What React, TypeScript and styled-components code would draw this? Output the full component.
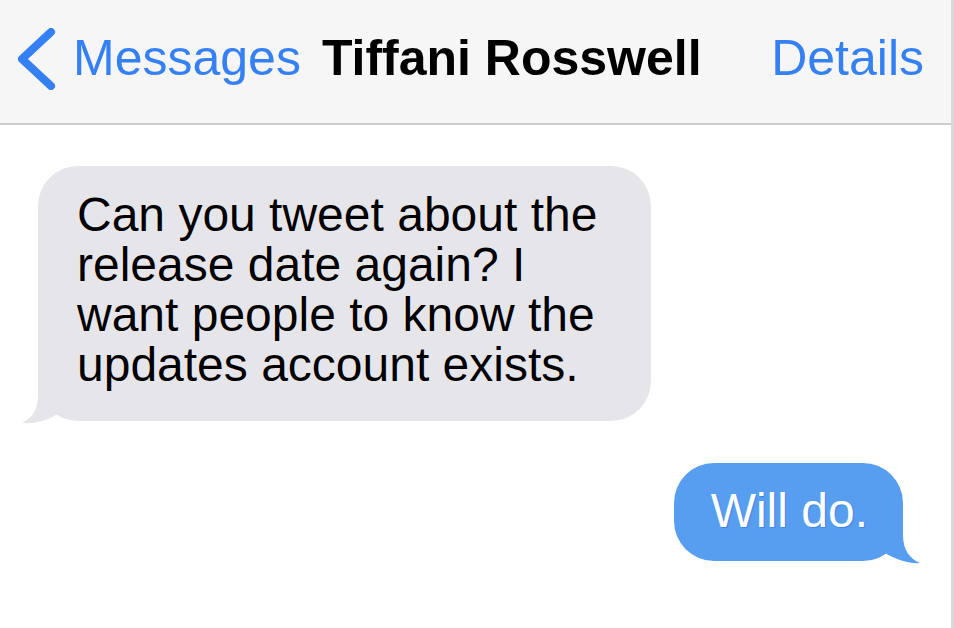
import React from "react";
import styled, { createGlobalStyle } from "styled-components";

const Global = createGlobalStyle`
  html, body { margin: 0; padding: 0; background: #ffffff; }
  body { font-family: "Liberation Sans", Arial, Helvetica, sans-serif; }
`;

const Page = styled.div`
  width: 951px;
  height: 628px;
  border-right: 3px solid #d9d9d9;
  background: #ffffff;
  display: flex;
  flex-direction: column;
  overflow: hidden;
`;

const NavBar = styled.header`
  height: 125px;
  box-sizing: border-box;
  padding: 0 27px 8px 16px;
  background: #f6f6f6;
  border-bottom: 2px solid #cecece;
  display: flex;
  align-items: center;
  flex-shrink: 0;
`;

const BackButton = styled.div`
  display: flex;
  align-items: center;
  gap: 17px;
  color: #3480f4;
`;

const Chevron = styled.svg`
  width: 40px;
  height: 62px;
  margin-top: 2px;
  display: block;
`;

const NavText = styled.span<{ $bold?: boolean; $blue?: boolean }>`
  font-size: 50px;
  line-height: 50px;
  font-weight: ${(p) => (p.$bold ? 700 : 400)};
  color: ${(p) => (p.$blue ? "#3480f4" : "#000000")};
  white-space: nowrap;
`;

const Title = styled(NavText)`
  margin-left: 21px;
`;

const DetailsLink = styled(NavText)`
  margin-left: auto;
`;

const Thread = styled.main`
  flex: 1;
  display: flex;
  flex-direction: column;
  gap: 42px;
  padding: 41px 48px 0 38px;
`;

const Bubble = styled.div<{ $mine?: boolean }>`
  position: relative;
  box-sizing: border-box;
  align-self: ${(p) => (p.$mine ? "flex-end" : "flex-start")};
  width: ${(p) => (p.$mine ? "auto" : "613px")};
  padding: ${(p) => (p.$mine ? "23px 35px 25px 37px" : "24px 39px 31px 39px")};
  border-radius: 40px;
  background: ${(p) => (p.$mine ? "#589ef0" : "#e5e5ea")};
  color: ${(p) => (p.$mine ? "#ffffff" : "#000000")};
  font-size: 48px;
  line-height: 50px;
  text-shadow: ${(p) =>
    p.$mine ? "1px 1px 1px rgba(40, 110, 230, 0.6)" : "0 0 1px rgba(255, 255, 255, 0.9)"};
`;

const BubbleText = styled.span`
  position: relative;
  z-index: 1;
`;

const Tail = styled.svg<{ $mine?: boolean }>`
  position: absolute;
  display: block;
  z-index: 0;
  ${(p) =>
    p.$mine
      ? "right: -21px; bottom: -4px; width: 84px; height: 50px;"
      : "left: -18px; bottom: -3px; width: 62px; height: 44px;"}
`;

export default function App() {
  return (
    <>
      <Global />
      <Page>
        <NavBar>
          <BackButton>
            <Chevron viewBox="0 0 40 62">
              <polyline
                points="35,4 6,31 35,58"
                fill="none"
                stroke="#3480f4"
                strokeWidth="8"
                strokeLinecap="round"
                strokeLinejoin="round"
              />
            </Chevron>
            <NavText $blue>Messages</NavText>
          </BackButton>
          <Title $bold>Tiffani Rosswell</Title>
          <DetailsLink $blue>Details</DetailsLink>
        </NavBar>
        <Thread>
          <Bubble>
            <Tail viewBox="0 0 62 44">
              <path
                d="M18,0 L18,15 C18,30 12,38 2,43 C16,44 30,40 40,32 C48,38 55,41 62,41 L62,0 Z"
                fill="#e5e5ea"
              />
            </Tail>
            <BubbleText>
              Can you tweet about the release date again? I want people to know the updates account exists.
            </BubbleText>
          </Bubble>
          <Bubble $mine>
            <Tail $mine viewBox="0 0 84 50">
              <path
                d="M63,0 L63,20 C63,35 70,44 80,48 C68,49 55,44 43,37 C35,43 22,46 10,46 L0,46 L0,0 Z"
                fill="#589ef0"
              />
            </Tail>
            <BubbleText>Will do.</BubbleText>
          </Bubble>
        </Thread>
      </Page>
    </>
  );
}
